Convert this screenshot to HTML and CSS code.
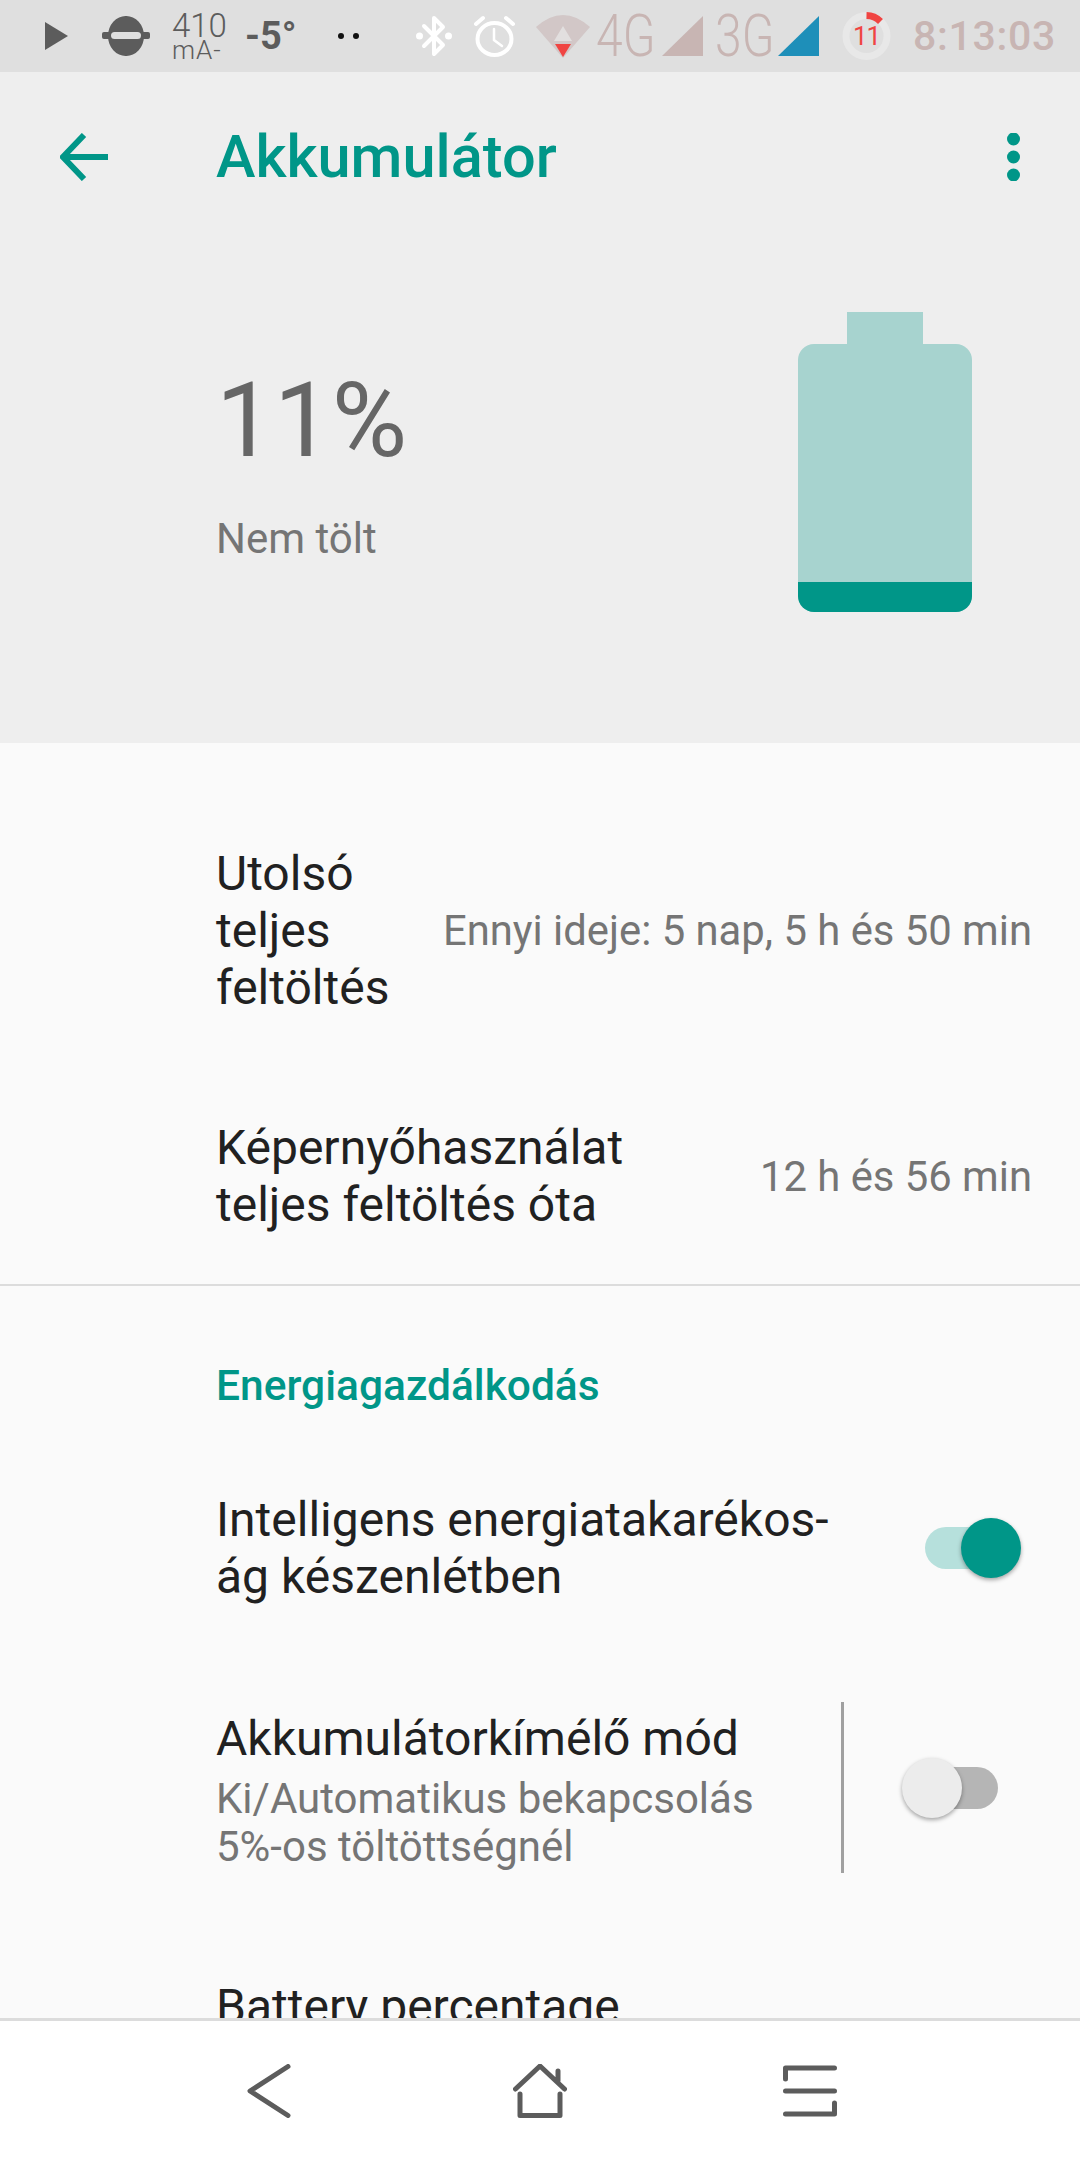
FILE: index.html
```html
<!DOCTYPE html>
<html lang="hu">
<head>
    <meta charset="UTF-8">
    <meta name="viewport" content="width=device-width, initial-scale=1.0">
    <title>Akkumulátor</title>
    <link rel="stylesheet" href="styles.css">
</head>
<body>
    <div class="phone">
        <div class="status-bar">
            <svg class="ic-play" viewBox="0 0 23 28"><path d="M0 0L23 14L0 28Z"/></svg>
            <svg class="ic-block" viewBox="0 0 48 40"><path d="M6 20a18 20 0 1 1 36 0a18 20 0 1 1-36 0Z"/><rect x="0" y="16" width="48" height="7" rx="2"/><rect x="9" y="16" width="30" height="7" rx="3.5" fill="#dfdfdf"/></svg>
            <div class="current"><span>410</span><span class="unit">mA-</span></div>
            <div class="temp">-5°</div>
            <div class="dots"><i></i><i></i></div>
            <svg class="ic-bt" viewBox="0 0 36 42"><path d="M8 11L27 30L18 39V3L27 12L8 31" fill="none" stroke="#fff" stroke-width="4" stroke-linecap="round" stroke-linejoin="round"/><circle cx="3.500" cy="21" r="3.500" fill="#fff"/><circle cx="32.500" cy="21" r="3.500" fill="#fff"/></svg>
            <svg class="ic-alarm" viewBox="0 0 41 42" fill="none" stroke="#fff" stroke-linecap="round"><ellipse cx="20.500" cy="24" rx="17" ry="16" stroke-width="4"/><path d="M20 14V25L28 31" stroke-width="2.500"/><path d="M2 9L9 3M39 9L32 3" stroke-width="4"/></svg>
            <svg class="ic-wifi" viewBox="0 0 54 43"><path d="M0 12Q27 -12 54 12L27 43Z" fill="#d2c7c7"/><path d="M18 26L27 11L36 26Z" fill="#e2dfdf"/><path d="M19 29H35L27 42Z" fill="#f04442"/></svg>
            <span class="net net-4g">4G</span>
            <svg class="ic-signal" viewBox="0 0 41 40"><path d="M41 0V40H0Z" fill="#c8b5b3"/></svg>
            <span class="net net-3g">3G</span>
            <svg class="ic-signal-blue" viewBox="0 0 41 40"><path d="M41 0V40H0Z" fill="#1e8fb9"/></svg>
            <div class="ring">
                <svg viewBox="0 0 49 48" fill="none" stroke-width="7"><circle cx="24.500" cy="24" r="20.500" stroke="#e8e8e8"/><path d="M24.500 3.500A20.500 20.500 0 0 1 38.500 9.500" stroke="#f04442"/></svg>
                <span>11</span>
            </div>
            <div class="clock">8:13:03</div>
        </div>

        <section class="hero">
            <div class="app-bar">
                <svg class="ic-back" viewBox="0 0 48 48" fill="none" stroke="#009688" stroke-width="6"><path d="M48 24H4M24 2L3 24L24 46"/></svg>
                <h1>Akkumulátor</h1>
                <svg class="ic-more" viewBox="0 0 13 48" fill="#009688"><circle cx="6.500" cy="6" r="6.500"/><circle cx="6.500" cy="24" r="6.500"/><circle cx="6.500" cy="42" r="6.500"/></svg>
            </div>
            <div class="summary">
                <div class="summary-text">
                    <div class="percent">11%</div>
                    <div class="charge-state">Nem tölt</div>
                </div>
                <div class="battery">
                    <div class="battery-cap"></div>
                    <div class="battery-body"><div class="battery-level"></div></div>
                </div>
            </div>
        </section>

        <main class="content">
            <div class="group first-group">
                <div class="row info-row">
                    <div class="row-title">Utolsó teljes feltöltés</div>
                    <div class="row-value">Ennyi ideje: 5 nap, 5 h és 50 min</div>
                </div>
                <div class="row info-row">
                    <div class="row-title">Képernyőhasználat<br>teljes feltöltés óta</div>
                    <div class="row-value">12 h és 56 min</div>
                </div>
            </div>
            <div class="group">
                <h2>Energiagazdálkodás</h2>
                <div class="row smart-row">
                    <div class="row-title">Intelligens energiatakarékos-<br>ág készenlétben</div>
                    <div class="switch on"><i></i></div>
                </div>
                <div class="row saver-row">
                    <div class="row-main">
                        <div class="row-title">Akkumulátorkímélő mód</div>
                        <div class="row-sub">Ki/Automatikus bekapcsolás<br>5%-os töltöttségnél</div>
                    </div>
                    <div class="switch-area"><div class="switch off"><i></i></div></div>
                </div>
                <div class="row last-row">
                    <div class="row-title">Battery percentage</div>
                </div>
            </div>
        </main>

        <nav class="nav-bar">
            <svg viewBox="0 0 44 54" class="nav-back" fill="none" stroke="#5c5c5c" stroke-width="5" stroke-linecap="round" stroke-linejoin="round"><path d="M41 2.500L3 27L41 51.500"/></svg>
            <svg viewBox="0 0 54 54" class="nav-home" fill="none" stroke="#5c5c5c" stroke-width="5" stroke-linecap="round" stroke-linejoin="round"><path d="M2.500 25L27 2L51.500 25M45 17V7"/><path d="M7 30V51.500H47V30"/></svg>
            <svg viewBox="0 0 54 52" class="nav-recent" fill="none" stroke="#5c5c5c" stroke-width="5" stroke-linecap="round" stroke-linejoin="round"><path d="M51.500 3H2.500V14M2.500 26H51.500M2.500 49H51.500V38"/></svg>
        </nav>
    </div>
</body>
</html>
```

FILE: styles.css
```css
* {
    box-sizing: border-box;
}

body {
    margin: 0;
    font-family: Roboto, "Noto Sans", sans-serif;
    background-color: #fafafa;
}

.phone {
    width: 1080px;
    height: 2160px;
    display: flex;
    flex-direction: column;
    overflow: hidden;
}

/* status bar */
.status-bar {
    height: 72px;
    flex: none;
    display: flex;
    align-items: center;
    padding-left: 45px;
    background-color: #dfdfdf;
}

.status-bar svg {
    flex: none;
    display: block;
}

.ic-play {
    width: 23px;
    height: 28px;
    fill: #5c5c5c;
}

.ic-block {
    width: 48px;
    height: 40px;
    margin-left: 34px;
    fill: #5c5c5c;
}

.current {
    width: 52px;
    margin-left: 22px;
    display: flex;
    flex-direction: column;
    color: #5c5c5c;
    font-size: 33px;
    line-height: 28px;
    font-weight: 300;
}

.current .unit {
    font-size: 26px;
    line-height: 20px;
    letter-spacing: 1px;
}

.temp {
    width: 50px;
    margin-left: 21px;
    color: #5c5c5c;
    font-size: 38px;
    font-weight: 700;
}

.dots {
    width: 21px;
    margin-left: 43px;
    display: flex;
    justify-content: space-between;
}

.dots i {
    width: 6px;
    height: 6px;
    border-radius: 50%;
    background-color: #111;
}

.ic-bt {
    width: 36px;
    height: 42px;
    margin-left: 57px;
}

.ic-alarm {
    width: 41px;
    height: 42px;
    margin-left: 22px;
}

.ic-wifi {
    width: 54px;
    height: 43px;
    margin-left: 21px;
}

.net {
    flex: none;
    width: 55px;
    color: #c8b5b3;
    font-size: 60px;
    font-weight: 300;
    line-height: 60px;
    white-space: nowrap;
    transform: scaleX(0.8);
    transform-origin: left center;
}

.net-4g {
    margin-left: 6px;
}

.net-3g {
    margin-left: 12px;
}

.ic-signal {
    width: 41px;
    height: 40px;
    margin-left: 11px;
}

.ic-signal-blue {
    width: 41px;
    height: 40px;
    margin-left: 8px;
}

.ring {
    position: relative;
    width: 49px;
    height: 48px;
    margin-left: 23px;
}

.ring span {
    position: absolute;
    inset: 0;
    display: flex;
    align-items: center;
    justify-content: center;
    color: #f04442;
    font-size: 26px;
    letter-spacing: -1px;
}

.clock {
    margin-left: 22px;
    color: #c8b5b3;
    font-size: 41px;
    font-weight: 500;
    letter-spacing: 0.7px;
    white-space: nowrap;
}

/* header area */
.hero {
    height: 671px;
    flex: none;
    background-color: #eeeeee;
}

.app-bar {
    height: 170px;
    display: flex;
    align-items: center;
    padding-left: 60px;
}

.ic-back {
    width: 48px;
    height: 48px;
    flex: none;
}

.app-bar h1 {
    flex: 1;
    margin: 0 0 0 108px;
    color: #009688;
    font-size: 59.500px;
    font-weight: 500;
}

.ic-more {
    width: 13px;
    height: 48px;
    margin-right: 60px;
    flex: none;
}

.summary {
    display: flex;
    justify-content: space-between;
    padding: 70px 108px 0 216px;
}

.summary-text {
    padding-top: 46px;
}

.percent {
    color: #666666;
    font-size: 103px;
    line-height: 125px;
}

.charge-state {
    margin-top: 31px;
    color: #757575;
    font-size: 42px;
    line-height: 50px;
}

.battery {
    width: 174px;
    display: flex;
    flex-direction: column;
    align-items: center;
}

.battery-cap {
    width: 76px;
    height: 32px;
    background-color: #a7d3cf;
}

.battery-body {
    width: 174px;
    height: 268px;
    display: flex;
    flex-direction: column;
    justify-content: flex-end;
    overflow: hidden;
    border-radius: 16px;
    background-color: #a7d3cf;
}

.battery-level {
    height: 30px;
    background-color: #009688;
}

/* list */
.content {
    flex: 1;
    min-height: 0;
    overflow: hidden;
}

.group.first-group {
    padding-top: 50px;
    border-bottom: 2px solid #dcdcdc;
}

.group h2 {
    margin: 0;
    padding: 76px 0 0 216px;
    color: #009688;
    font-size: 42.500px;
    font-weight: 500;
    line-height: 48px;
}

.row {
    display: flex;
    align-items: center;
    padding: 52px 48px 52px 216px;
}

.info-row {
    padding-bottom: 51px;
}

.row-title {
    color: #212121;
    font-size: 48px;
    line-height: 57px;
}

.info-row .row-title {
    flex: 1;
}

.row-value {
    flex: none;
    margin-left: 40px;
    color: #757575;
    font-size: 41.800px;
    white-space: nowrap;
}

.row-sub {
    margin-top: 8px;
    color: #757575;
    font-size: 42px;
    line-height: 48px;
}

.smart-row {
    justify-content: space-between;
    padding-top: 81px;
    padding-right: 71px;
    padding-bottom: 97px;
}

.saver-row {
    padding: 0 0 0 216px;
}

.row-main {
    width: 625px;
    padding-top: 6px;
}

.switch-area {
    height: 171px;
    flex: none;
    width: 239px;
    display: flex;
    align-items: center;
    padding-left: 70px;
    border-left: 3px solid #a0a0a0;
}

.switch {
    position: relative;
    width: 84px;
    height: 42px;
    border-radius: 21px;
}

.switch i {
    position: absolute;
    top: -9px;
    width: 60px;
    height: 60px;
    border-radius: 50%;
    box-shadow: 0 2px 4px rgba(0, 0, 0, 0.35);
}

.switch.on {
    background-color: #b6e0dc;
}

.switch.on i {
    right: -12px;
    background-color: #009688;
}

.switch.off {
    background-color: #b5b5b5;
}

.switch.off i {
    left: -12px;
    background-color: #ececec;
}

.last-row {
    padding-top: 105px;
}

/* navigation */
.nav-bar {
    height: 142px;
    flex: none;
    display: flex;
    align-items: center;
    padding: 0 243px 0 247px;
    justify-content: space-between;
    border-top: 3px solid #dcdcdc;
    background-color: #fff;
}

.nav-back {
    width: 44px;
    height: 54px;
}

.nav-home {
    width: 54px;
    height: 54px;
    margin-left: 6px;
}

.nav-recent {
    width: 54px;
    height: 52px;
}
```
